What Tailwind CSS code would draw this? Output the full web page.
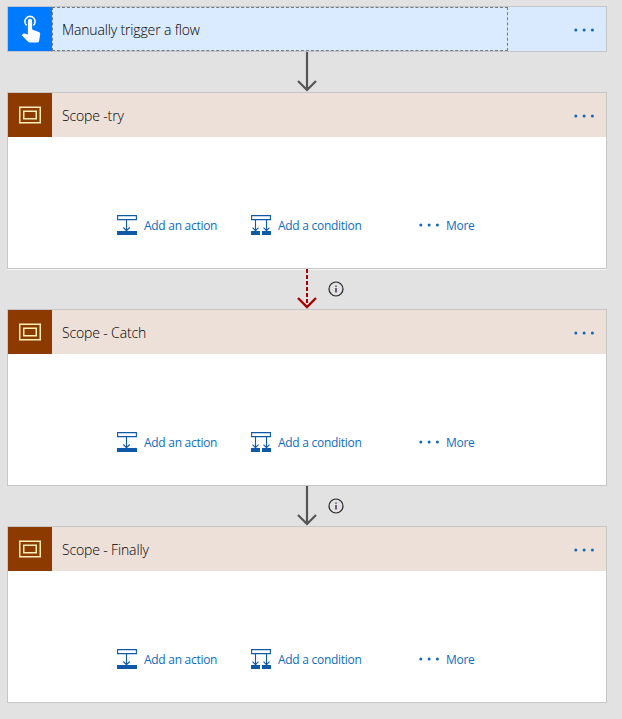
<!DOCTYPE html>
<html lang="en">
<head>
<meta charset="utf-8">
<title>Flow designer</title>
<script src="https://cdn.jsdelivr.net/npm/@tailwindcss/browser@4"></script>
</head>
<body class="bg-[#e2e2e2] w-[622px] h-[719px] overflow-hidden pt-[6px] pl-[7px] font-['Open_Sans','Noto_Sans',sans-serif]">
<svg class="hidden">
  <symbol id="scope" viewBox="0 0 24 18"><g fill="none" stroke="#fff0b8" stroke-width="1.5"><rect x="1.75" y="1.25" width="20.5" height="15.5"/><rect x="5.75" y="5.25" width="12.5" height="7.500"/></g></symbol>
  <symbol id="dots" viewBox="0 0 22 4"><g fill="#1267b8"><circle cx="2.8" cy="2" r="1.5"/><circle cx="11.1" cy="2" r="1.5"/><circle cx="19.4" cy="2" r="1.5"/></g></symbol>
  <symbol id="action" viewBox="0 0 20 20"><path d="M.6.6h18.8v4H.6zM9.5 4.6V15.500M6.300 12.500l3.200 3.200 3.200-3.200" fill="none" stroke="#0f5aa8" stroke-width="1.1"/><path d="M0 16h20v4H0z" fill="#0f5aa8"/></symbol>
  <symbol id="condition" viewBox="0 0 20 20"><path d="M.6.6h18.800v4H.6zM4.500 4.600V15.500M1.500 12.600l3 3 3-3M15.500 4.600V15.500M12.500 12.600l3 3 3-3" fill="none" stroke="#0f5aa8" stroke-width="1.1"/><path d="M0 16h9v4H0zM11 16h9v4h-9z" fill="#0f5aa8"/></symbol>
  <symbol id="arrow" viewBox="0 0 20 40"><path d="M10 0v38M1 29l9 9 9-9" fill="none" stroke="#555" stroke-width="2.200"/></symbol>
  <symbol id="fail-arrow" viewBox="0 0 20 40"><path d="M10 0v38" fill="none" stroke="#a80000" stroke-width="2" stroke-dasharray="4 2"/><path d="M1 29l9 9 9-9" fill="none" stroke="#a80000" stroke-width="2.400"/></symbol>
  <symbol id="info" viewBox="0 0 16 16"><circle cx="8" cy="8" r="7" fill="none" stroke="#222" stroke-width="1.200"/><path d="M8 7v4.500M8 4.500v1.300" stroke="#30104a" stroke-width="1.300"/></symbol>
</svg>

<section class="w-[600px] h-[46px] border border-[#c3c5c8] bg-[#d9eaff] flex">
  <div class="w-[44px] h-[44px] bg-[#007aff] shrink-0">
    <svg class="w-[44px] h-[44px]" viewBox="0 0 44 44"><path d="M18.600 18.300A5.100 5.100 0 1 1 25.400 18.300" fill="none" stroke="#fff" stroke-width="1.600"/><path d="M19.900 13.900a2.100 2.100 0 0 1 4.200 0v8.600l6.700 2.500q1.500.6 1.400 2.100l-1.100 6.900q-.3 1.500-1.900 1.500h-7.400q-1 0-1.700-.7l-6.400-6.600 1.200-1.300q.6-.6 1.500-.4l3.500.9z" fill="#fff"/></svg>
  </div>
  <div class="w-[456px] h-[44px] border border-dashed border-[#777] bg-[#dbebff] flex items-center pl-[9px]"><span class="text-[14px] font-light leading-5 tracking-[-0.15px] text-black whitespace-nowrap relative top-px">Manually trigger a flow</span></div>
  <svg class="w-[22px] h-[4px] ml-auto mr-[11px] mt-[21px]"><use href="#dots"/></svg>
</section>

<div class="h-[40px] pl-[290px]"><svg class="w-[20px] h-[40px]"><use href="#arrow"/></svg></div>

<section class="w-[600px] h-[177px] border border-[#c6c6c6] bg-white shadow-[0_1px_0_#f6f6f6]">
  <header class="h-[44px] bg-[#ede0d9] flex items-center">
    <div class="w-[44px] h-[44px] bg-[#8c3a00] flex items-center justify-center"><svg class="w-[24px] h-[18px]"><use href="#scope"/></svg></div>
    <h2 class="pl-[10px] text-[14px] font-light leading-5 tracking-[-0.15px] text-black relative top-px">Scope -try</h2>
    <svg class="w-[22px] h-[4px] ml-auto mr-[11px] mt-[2px]"><use href="#dots"/></svg>
  </header>
  <div class="flex items-center h-[20px] mt-[78px] pl-[109px] text-[12px] leading-[21px] tracking-[-0.28px] text-[#0f6cbd] whitespace-nowrap">
    <div class="w-[134px] flex gap-[7px]"><svg class="w-[20px] h-[20px]"><use href="#action"/></svg><span>Add an action</span></div>
    <div class="w-[167px] flex gap-[7px]"><svg class="w-[20px] h-[20px]"><use href="#condition"/></svg><span>Add a condition</span></div>
    <div class="flex items-center gap-[6px]"><svg class="w-[22px] h-[4px]"><use href="#dots"/></svg><span>More</span></div>
  </div>
</section>

<div class="h-[40px] pl-[290px] flex items-center gap-[11px]"><svg class="w-[20px] h-[40px]"><use href="#fail-arrow"/></svg><svg class="w-[16px] h-[16px]"><use href="#info"/></svg></div>

<section class="w-[600px] h-[177px] border border-[#c6c6c6] bg-white">
  <header class="h-[44px] bg-[#ede0d9] flex items-center">
    <div class="w-[44px] h-[44px] bg-[#8c3a00] flex items-center justify-center"><svg class="w-[24px] h-[18px]"><use href="#scope"/></svg></div>
    <h2 class="pl-[10px] text-[14px] font-light leading-5 tracking-[-0.15px] text-black relative top-px">Scope - Catch</h2>
    <svg class="w-[22px] h-[4px] ml-auto mr-[11px] mt-[2px]"><use href="#dots"/></svg>
  </header>
  <div class="flex items-center h-[20px] mt-[78px] pl-[109px] text-[12px] leading-[21px] tracking-[-0.28px] text-[#0f6cbd] whitespace-nowrap">
    <div class="w-[134px] flex gap-[7px]"><svg class="w-[20px] h-[20px]"><use href="#action"/></svg><span>Add an action</span></div>
    <div class="w-[167px] flex gap-[7px]"><svg class="w-[20px] h-[20px]"><use href="#condition"/></svg><span>Add a condition</span></div>
    <div class="flex items-center gap-[6px]"><svg class="w-[22px] h-[4px]"><use href="#dots"/></svg><span>More</span></div>
  </div>
</section>

<div class="h-[40px] pl-[290px] flex items-center gap-[11px]"><svg class="w-[20px] h-[40px]"><use href="#arrow"/></svg><svg class="w-[16px] h-[16px]"><use href="#info"/></svg></div>

<section class="w-[600px] h-[177px] border border-[#c6c6c6] bg-white">
  <header class="h-[44px] bg-[#ede0d9] flex items-center">
    <div class="w-[44px] h-[44px] bg-[#8c3a00] flex items-center justify-center"><svg class="w-[24px] h-[18px]"><use href="#scope"/></svg></div>
    <h2 class="pl-[10px] text-[14px] font-light leading-5 tracking-[-0.15px] text-black relative top-px">Scope - Finally</h2>
    <svg class="w-[22px] h-[4px] ml-auto mr-[11px] mt-[2px]"><use href="#dots"/></svg>
  </header>
  <div class="flex items-center h-[20px] mt-[78px] pl-[109px] text-[12px] leading-[21px] tracking-[-0.28px] text-[#0f6cbd] whitespace-nowrap">
    <div class="w-[134px] flex gap-[7px]"><svg class="w-[20px] h-[20px]"><use href="#action"/></svg><span>Add an action</span></div>
    <div class="w-[167px] flex gap-[7px]"><svg class="w-[20px] h-[20px]"><use href="#condition"/></svg><span>Add a condition</span></div>
    <div class="flex items-center gap-[6px]"><svg class="w-[22px] h-[4px]"><use href="#dots"/></svg><span>More</span></div>
  </div>
</section>
</body>
</html>
